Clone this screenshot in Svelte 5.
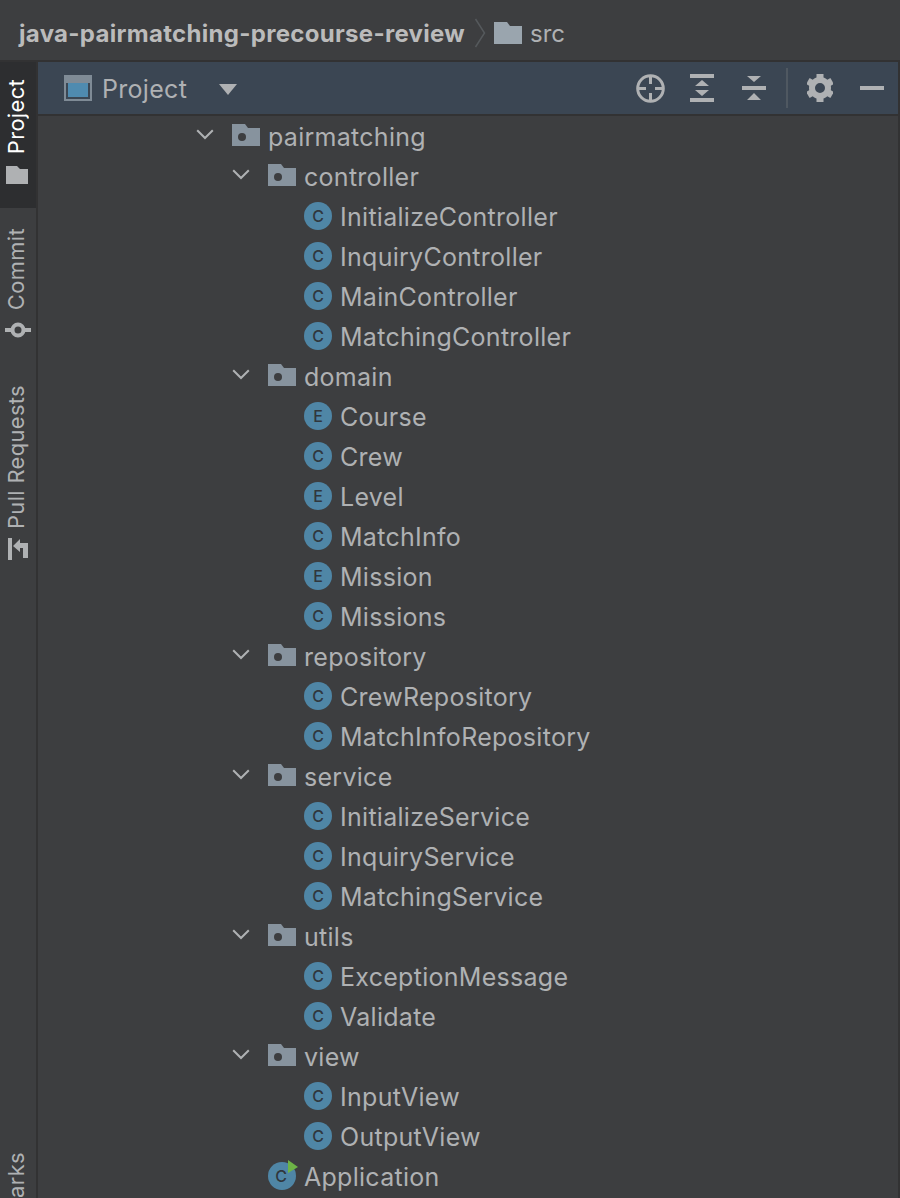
<script>
  const tree = [
    { n: 'pairmatching', d: 0, t: 'p' },
    { n: 'controller', d: 1, t: 'p' },
    { n: 'InitializeController', d: 2, t: 'C' },
    { n: 'InquiryController', d: 2, t: 'C' },
    { n: 'MainController', d: 2, t: 'C' },
    { n: 'MatchingController', d: 2, t: 'C' },
    { n: 'domain', d: 1, t: 'p' },
    { n: 'Course', d: 2, t: 'E' },
    { n: 'Crew', d: 2, t: 'C' },
    { n: 'Level', d: 2, t: 'E' },
    { n: 'MatchInfo', d: 2, t: 'C' },
    { n: 'Mission', d: 2, t: 'E' },
    { n: 'Missions', d: 2, t: 'C' },
    { n: 'repository', d: 1, t: 'p' },
    { n: 'CrewRepository', d: 2, t: 'C' },
    { n: 'MatchInfoRepository', d: 2, t: 'C' },
    { n: 'service', d: 1, t: 'p' },
    { n: 'InitializeService', d: 2, t: 'C' },
    { n: 'InquiryService', d: 2, t: 'C' },
    { n: 'MatchingService', d: 2, t: 'C' },
    { n: 'utils', d: 1, t: 'p' },
    { n: 'ExceptionMessage', d: 2, t: 'C' },
    { n: 'Validate', d: 2, t: 'C' },
    { n: 'view', d: 1, t: 'p' },
    { n: 'InputView', d: 2, t: 'C' },
    { n: 'OutputView', d: 2, t: 'C' },
    { n: 'Application', d: 1, t: 'A' }
  ];
  const teeth = [0, 60, 120, 180, 240, 300];
</script>

<div class="ide">
  <header class="crumbs">
    <span class="crumb-root">java-pairmatching-precourse-review</span>
    <svg class="crumb-sep" width="12" height="30" viewBox="0 0 12 30"><path d="M1.5 1 L10.5 15 L1.5 29" /></svg>
    <svg class="crumb-folder" width="28" height="22" viewBox="0 0 28 22"><path d="M0 0H13L16 4H28V22H0Z" /></svg>
    <span class="crumb-src">src</span>
  </header>

  <div class="body">
    <nav class="rail">
      <div class="tab active">
        <span class="vtext">Project</span>
        <svg width="22" height="18" viewBox="0 0 22 18"><path d="M0 0H11L14 3H22V18H0Z" fill="#afb1b3" /></svg>
      </div>
      <div class="tab commit">
        <span class="vtext">Commit</span>
        <svg width="26" height="16" viewBox="0 0 26 16"><circle cx="13" cy="8" r="5.5" fill="none" stroke="#afb1b3" stroke-width="4" /><path d="M0 8H6M20 8H26" stroke="#afb1b3" stroke-width="4" /></svg>
      </div>
      <div class="tab pull">
        <span class="vtext">Pull Requests</span>
        <svg width="20" height="22" viewBox="0 0 20 22"><path d="M0 0H4V22H0Z M5 8L12 1V5H20V20H15V10H12V14Z" fill="#afb1b3" /></svg>
      </div>
      <div class="tab marks"><span class="vtext">Bookmarks</span></div>
    </nav>

    <main class="panel">
      <div class="toolbar">
        <svg class="win" width="28" height="26" viewBox="0 0 28 26">
          <rect width="28" height="26" fill="#7f8b96" />
          <rect x="2" y="8" width="24" height="16" fill="#3b4754" />
          <rect x="4" y="8" width="20" height="14" fill="#4f8bb0" />
        </svg>
        <span class="title">Project</span>
        <svg class="caret" width="18" height="11" viewBox="0 0 18 11"><path d="M0 0H18L9 11Z" /></svg>
        <div class="actions">
          <svg width="29" height="29" viewBox="0 0 29 29"><circle cx="14.5" cy="14.5" r="12.8" fill="none" stroke="#afb1b3" stroke-width="3" /><path d="M14.5 3V10M14.5 19V26M3 14.5H10M19 14.5H26" stroke="#afb1b3" stroke-width="3" /></svg>
          <svg width="24" height="28" viewBox="0 0 24 28" class="act-expand"><path d="M0 0H24V4H0Z M0 24H24V28H0Z M12 6L19 12H5Z M5 16H19L12 22Z" fill="#afb1b3" /></svg>
          <svg width="24" height="24" viewBox="0 0 24 24" class="act-collapse"><path d="M5 0H19L12 6Z M0 10H24V14H0Z M12 17L19 24H5Z" fill="#afb1b3" /></svg>
          <span class="divider"></span>
          <svg width="26" height="28" viewBox="-13 -14 26 28" class="act-gear">
            <circle r="8" fill="none" stroke="#afb1b3" stroke-width="6" />
            {#each teeth as a}
              <rect x="-3.5" y="-14" width="7" height="5" fill="#afb1b3" transform="rotate({a})" />
            {/each}
          </svg>
          <svg width="24" height="4" viewBox="0 0 24 4" class="act-min"><rect width="24" height="4" fill="#afb1b3" /></svg>
        </div>
      </div>

      <ul class="tree">
        {#each tree as item}
          <li class="row" style="padding-left: {158 + 36 * item.d}px">
            <span class="arrow">
              {#if item.t === 'p'}
                <svg width="18" height="11" viewBox="0 0 18 11"><path d="M1.2 1.2L9 9L16.8 1.2" /></svg>
              {/if}
            </span>
            {#if item.t === 'p'}
              <svg class="icon folder" width="28" height="22" viewBox="0 0 28 22">
                <path d="M0 0H13L16 4H28V22H0Z" fill="#87939e" />
                <circle cx="10" cy="13" r="4" fill="#3d3e40" />
              </svg>
            {:else if item.t === 'A'}
              <svg class="icon cls" width="28" height="28" viewBox="0 0 28 28">
                <circle cx="14" cy="14" r="14" fill="#4f86a6" />
                <path d="M20 -2L30 5L20 11Z" fill="#6db346" />
                <text x="13" y="20" class="glyph">C</text>
              </svg>
            {:else}
              <svg class="icon cls" width="28" height="28" viewBox="0 0 28 28">
                <circle cx="14" cy="14" r="14" fill="#4f86a6" />
                <text x="14" y="20" class="glyph">{item.t}</text>
              </svg>
            {/if}
            <span class="label">{item.n}</span>
          </li>
        {/each}
      </ul>
    </main>
  </div>
</div>

<style>
  :global(body) {
    margin: 0;
    background: #3d3e40;
  }

  .ide {
    width: 900px;
    height: 1198px;
    display: flex;
    flex-direction: column;
    overflow: hidden;
    background: #3d3e40;
    color: #afb1b3;
    font-family: Inter, "Liberation Sans", sans-serif;
  }

  .crumbs {
    height: 60px;
    box-sizing: content-box;
    flex: none;
    display: flex;
    align-items: center;
    padding-left: 19px;
    border-bottom: 2px solid #323233;
    font-size: 24px;
  }

  .crumb-root {
    margin-top: 6px;
    font-weight: 700;
    letter-spacing: 0.3px;
    color: #bbbbbb;
  }

  .crumb-sep {
    margin-left: 9px;
    margin-top: 6px;
  }

  .crumb-sep path {
    fill: none;
    stroke: #55595c;
    stroke-width: 1.5;
  }

  .crumb-folder {
    margin-left: 8px;
    margin-top: 5px;
    fill: #9aa5ae;
  }

  .crumb-src {
    margin-top: 6px;
    margin-left: 8px;
    color: #afb1b3;
  }

  .body {
    flex: 1;
    display: flex;
    min-height: 0;
  }

  .rail {
    width: 36px;
    flex: none;
    display: flex;
    flex-direction: column;
    border-right: 2px solid #323233;
    overflow: hidden;
    font-size: 22px;
    letter-spacing: 0.3px;
  }

  .tab {
    display: flex;
    flex-direction: column;
    align-items: center;
    flex: none;
  }

  .vtext {
    writing-mode: vertical-rl;
    transform: rotate(180deg);
    line-height: 22px;
    margin-right: 4px;
  }

  .active {
    height: 146px;
    background: #2d2e30;
    color: #ffffff;
    padding-top: 17px;
    box-sizing: border-box;
    gap: 12px;
  }

  .active svg {
    margin-right: 2px;
  }

  .commit {
    margin-top: 20px;
    gap: 12px;
  }

  .pull {
    margin-top: 47px;
    gap: 9px;
  }

  .marks {
    margin-top: 592px;
  }

  .panel {
    flex: 1;
    min-width: 0;
    display: flex;
    flex-direction: column;
    border-right: 2px solid #323233;
  }

  .toolbar {
    height: 52px;
    flex: none;
    display: flex;
    align-items: center;
    padding-left: 26px;
    background: #3b4653;
    border-bottom: 2px solid #323233;
    font-size: 25px;
  }

  .title {
    margin-left: 10px;
    margin-top: 1px;
    letter-spacing: 0.3px;
  }

  .caret {
    margin-left: 32px;
    margin-top: 3px;
    fill: #afb1b3;
  }

  .actions {
    margin-left: auto;
    display: flex;
    align-items: center;
    padding-right: 14px;
  }

  .act-expand { margin-left: 25px; }
  .act-collapse { margin-left: 28px; }
  .act-gear { margin-left: 19px; }
  .act-min { margin-left: 27px; }

  .divider {
    width: 2px;
    height: 40px;
    margin-left: 20px;
    background: #4f5861;
  }

  .tree {
    list-style: none;
    margin: 0;
    padding: 1px 0 0;
  }

  .row {
    height: 40px;
    display: flex;
    align-items: center;
    font-size: 25px;
    letter-spacing: 0.28px;
    color: #afb1b3;
  }

  .arrow {
    width: 36px;
    flex: none;
    display: flex;
    align-items: center;
    box-sizing: border-box;
    margin-top: -6px;
  }

  .arrow path {
    fill: none;
    stroke: #afb1b3;
    stroke-width: 2;
  }

  .icon {
    flex: none;
    overflow: visible;
  }

  .folder {
    margin-top: -4px;
  }

  .cls {
    margin-top: -2px;
  }

  .label {
    margin-left: 8px;
    white-space: nowrap;
  }

  .glyph {
    font-family: Inter, "Liberation Sans", sans-serif;
    font-size: 16px;
    font-weight: 500;
    letter-spacing: 0;
    fill: #30373d;
    text-anchor: middle;
  }
</style>
